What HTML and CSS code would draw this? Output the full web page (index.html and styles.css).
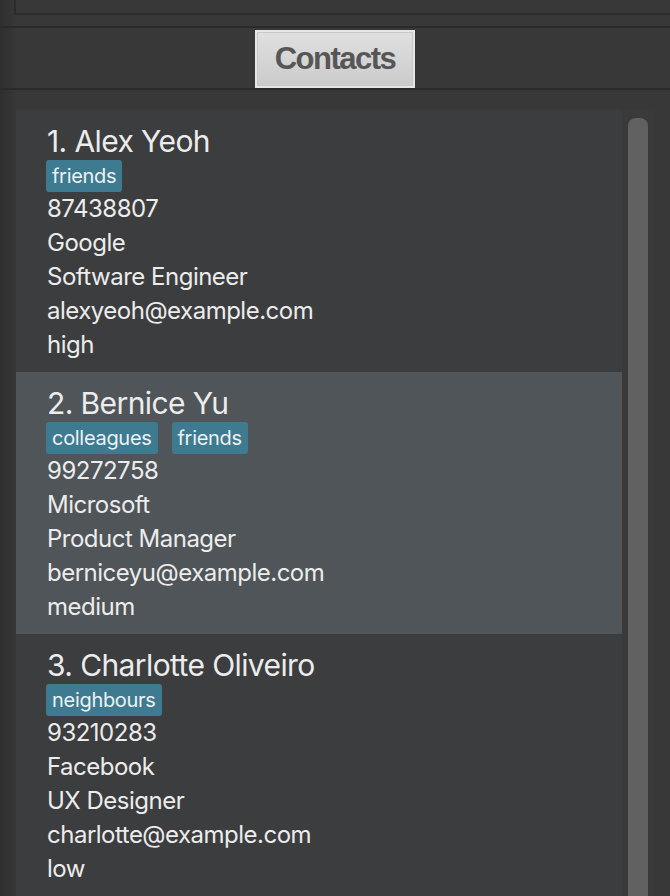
FILE: index.html
```html
<!DOCTYPE html>
<html>
<head>
<meta charset="utf-8">
<link rel="stylesheet" href="styles.css">
</head>
<body>
<div class="app">
  <div class="top-area"><div class="top-inner"></div></div>
  <div class="header"><button class="title-btn">Contacts</button></div>
  <div class="list-area">
    <div class="cards">
      <div class="card">
        <div class="name">1. Alex Yeoh</div>
        <div class="tags"><span class="tag">friends</span></div>
        <div class="line">87438807</div>
        <div class="line">Google</div>
        <div class="line">Software Engineer</div>
        <div class="line">alexyeoh@example.com</div>
        <div class="line">high</div>
      </div>
      <div class="card selected">
        <div class="name">2. Bernice Yu</div>
        <div class="tags"><span class="tag">colleagues</span><span class="tag">friends</span></div>
        <div class="line">99272758</div>
        <div class="line">Microsoft</div>
        <div class="line">Product Manager</div>
        <div class="line">berniceyu@example.com</div>
        <div class="line">medium</div>
      </div>
      <div class="card">
        <div class="name">3. Charlotte Oliveiro</div>
        <div class="tags"><span class="tag">neighbours</span></div>
        <div class="line">93210283</div>
        <div class="line">Facebook</div>
        <div class="line">UX Designer</div>
        <div class="line">charlotte@example.com</div>
        <div class="line">low</div>
      </div>
    </div>
    <div class="scrollbar"><div class="thumb"></div></div>
  </div>
</div>
</body>
</html>
```
FILE: styles.css
```css
html, body {
  margin: 0;
  padding: 0;
  background: #383838;
  overflow: hidden;
}
.app {
  width: 670px;
  height: 896px;
  background: linear-gradient(to right, #2f2f2f 0px, #363636 14px, #383838 16px);
  font-family: Inter, "Open Sans", sans-serif;
  overflow: hidden;
}
.top-area {
  height: 26px;
  border-bottom: 2px solid #2a2a2a;
  box-sizing: content-box;
}
.top-inner {
  margin-left: 14px;
  height: 13px;
  border-left: 2px solid #2b2b2b;
  border-bottom: 2px solid #2b2b2b;
  background: #383838;
}
.header {
  border-bottom: 2px solid #2a2a2a;
  display: flex;
  justify-content: center;
  align-items: flex-start;
  padding-top: 2px;
  box-sizing: border-box;
  height: 62px;
}
.title-btn {
  margin: 0;
  width: 160px;
  height: 58px;
  border: 2px solid #e6e6e6;
  box-shadow: inset 0 0 0 1px #c8c8c8;
  background: linear-gradient(#e0e0e0, #cbcbcb);
  color: #565656;
  font-family: "Liberation Sans", Arial, sans-serif;
  font-weight: bold;
  font-size: 31px;
  letter-spacing: -1.5px;
  padding: 0;
}
.list-area {
  display: flex;
  padding-top: 20px;
  padding-left: 16px;
}
.cards {
  width: 606px;
}
.card {
  background: #3c3d3f;
  height: 262px;
  box-sizing: border-box;
  padding: 12px 0 0 31px;
  color: #ececec;
}
.card.selected {
  background: #4f5558;
}
.name {
  font-size: 30px;
  line-height: 38px;
  height: 38px;
  letter-spacing: -0.6px;
}
.tags {
  display: flex;
  gap: 14px;
  height: 32px;
  margin-left: -1px;
}
.tag {
  background: #3e7a90;
  color: #eef2f4;
  font-size: 20px;
  line-height: 32px;
  height: 32px;
  padding: 0 6px;
  border-radius: 3px;
  letter-spacing: -0.3px;
}
.line {
  font-size: 24px;
  line-height: 34px;
  height: 34px;
  letter-spacing: -0.5px;
}
.scrollbar {
  width: 26px;
  padding-top: 8px;
  padding-left: 6px;
  background: #3a3a3a;
}
.thumb {
  width: 20px;
  height: 800px;
  background: #616161;
  border-radius: 8px 8px 0 0;
}
```
